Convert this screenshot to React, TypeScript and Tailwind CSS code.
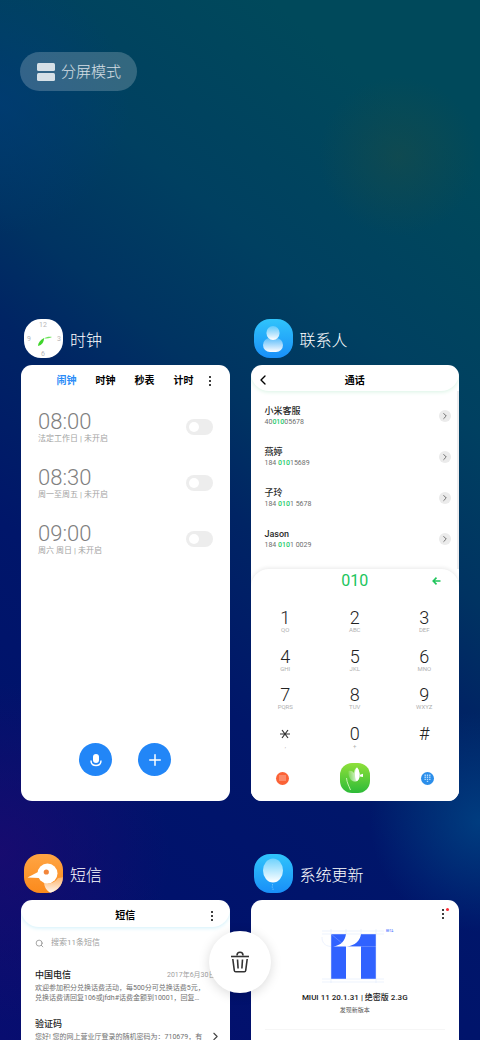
import React, { useState } from 'react';
import { ChevronLeft, ChevronRight, Plus, Search } from 'lucide-react';

interface Alarm {
  time: string;
  label: string;
}

interface CallEntry {
  name: string;
  number: [string, string, string];
}

const alarms: Alarm[] = [
  { time: '08:00', label: '法定工作日 | 未开启' },
  { time: '08:30', label: '周一至周五 | 未开启' },
  { time: '09:00', label: '周六 周日 | 未开启' },
];

const calls: CallEntry[] = [
  { name: '小米客服', number: ['40', '010', '05678'] },
  { name: '燕婷', number: ['184 ', '010', '15689'] },
  { name: '子玲', number: ['184 ', '010', '1 5678'] },
  { name: 'Jason', number: ['184 ', '010', '1 0029'] },
];

const dialKeys = [
  { digit: '1', sub: 'QO' },
  { digit: '2', sub: 'ABC' },
  { digit: '3', sub: 'DEF' },
  { digit: '4', sub: 'GHI' },
  { digit: '5', sub: 'JKL' },
  { digit: '6', sub: 'MNO' },
  { digit: '7', sub: 'PQRS' },
  { digit: '8', sub: 'TUV' },
  { digit: '9', sub: 'WXYZ' },
  { digit: '*', sub: ',' },
  { digit: '0', sub: '+' },
  { digit: '#', sub: '' },
];

const ClockIcon: React.FC = () => (
  <svg viewBox="0 0 39 39" className="size-[39px]" aria-hidden="true">
    <rect width="39" height="39" rx="17" fill="#fff" />
    <g fill="#b8b8b8" fontSize="7" fontFamily="Roboto, sans-serif" textAnchor="middle">
      <text x="19" y="8">12</text>
      <text x="35" y="22">3</text>
      <text x="19" y="37">6</text>
      <text x="5" y="22">9</text>
    </g>
    <path d="M14 27c0-3 2-6 6-8 0 4-2 7-6 8z" fill="#3fd52b" />
    <path d="M20 19.500c2-1.500 5-2 8-1.500-2 1.500-5 1.500-8 1.500z" fill="#6be35a" />
  </svg>
);

const ContactsIcon: React.FC = () => (
  <svg viewBox="0 0 39 39" className="size-[39px]" aria-hidden="true">
    <defs>
      <linearGradient id="contactsBg" x1="0" y1="0" x2="0" y2="1">
        <stop offset="0" stopColor="#30c4fb" />
        <stop offset="1" stopColor="#198ff8" />
      </linearGradient>
      <linearGradient id="contactsFg" x1="0" y1="0" x2="0" y2="1">
        <stop offset="0" stopColor="#fff" stopOpacity="0.25" />
        <stop offset="1" stopColor="#fff" />
      </linearGradient>
    </defs>
    <rect width="39" height="39" rx="16" fill="url(#contactsBg)" />
    <rect x="9" y="19" width="20" height="14" rx="7" fill="url(#contactsFg)" />
    <rect x="12.500" y="7" width="13" height="14" rx="6.500" fill="url(#contactsFg)" />
  </svg>
);

const MessagesIcon: React.FC = () => (
  <svg viewBox="0 0 39 39" className="size-[39px]" aria-hidden="true">
    <defs>
      <linearGradient id="messagesBg" x1="0" y1="0" x2="0" y2="1">
        <stop offset="0" stopColor="#ffa544" />
        <stop offset="1" stopColor="#fb8a1c" />
      </linearGradient>
      <linearGradient id="messagesBody" x1="0" y1="0" x2="0" y2="1">
        <stop offset="0" stopColor="#fff" stopOpacity="0.3" />
        <stop offset="1" stopColor="#fff" stopOpacity="0.95" />
      </linearGradient>
      <clipPath id="messagesClip">
        <rect width="39" height="39" rx="16" />
      </clipPath>
    </defs>
    <g clipPath="url(#messagesClip)">
      <rect width="39" height="39" fill="url(#messagesBg)" />
      <path d="M20 28c4 3 11 1 14-4l6-1v16H27c-4-2-7-6-7-11z" fill="url(#messagesBody)" />
      <path d="M3.500 23.500 15 17.500v6.500z" fill="#fff" />
      <circle cx="23.500" cy="19.500" r="10" fill="#fff" />
      <circle cx="22.300" cy="18" r="2.600" fill="#f2853a" />
    </g>
  </svg>
);

const UpdaterIcon: React.FC = () => (
  <svg viewBox="0 0 39 39" className="size-[39px]" aria-hidden="true">
    <defs>
      <linearGradient id="balloon" x1="0" y1="0" x2="0" y2="1">
        <stop offset="0" stopColor="#6fd2fd" />
        <stop offset="1" stopColor="#fff" />
      </linearGradient>
    </defs>
    <rect width="39" height="39" rx="16" fill="url(#contactsBg)" />
    <ellipse cx="19" cy="16.500" rx="10" ry="12" fill="url(#balloon)" />
    <path d="M18.500 30v2l-.500 1 1 1.500v1.500" stroke="#7fcfff" strokeWidth="0.700" strokeDasharray="1.500 1" fill="none" />
  </svg>
);

const CallIcon: React.FC = () => (
  <svg viewBox="0 0 30 30" className="size-[30px]" aria-hidden="true">
    <defs>
      <linearGradient id="callBg" x1="0" y1="0" x2="0" y2="1">
        <stop offset="0" stopColor="#8fe03a" />
        <stop offset="1" stopColor="#2dbb38" />
      </linearGradient>
      <linearGradient id="callPetal" x1="0" y1="0" x2="1" y2="0">
        <stop offset="0" stopColor="#fff" stopOpacity="0.15" />
        <stop offset="1" stopColor="#fff" />
      </linearGradient>
    </defs>
    <rect width="30" height="30" rx="12" fill="url(#callBg)" />
    <path d="M8.500 8c2-.500 4 0 5.500 2 0-3 1.500-4.500 3-5.500 2 2 3 6 2.500 9-.300 3-2.500 5.500-5 5-4-.500-6.500-5-6-10.500z" fill="url(#callPetal)" />
    <path d="M17 4.500c2 2 2.800 6 2.300 9.500-.300 2-1.300 4-2.800 4-2-3-2.300-10.500.500-13.500z" fill="#fff" />
    <path d="M20 11.800 23 10.800v3.200l-3-.500z" fill="#fff" />
    <path d="M6.500 15c.500 5 2 7 4 12" stroke="#c9f3b0" strokeWidth="1" fill="none" />
  </svg>
);

const TrashIcon: React.FC = () => (
  <svg viewBox="0 0 20 22" className="h-[22px] w-5" fill="none" stroke="#333" strokeWidth="1.600" aria-hidden="true">
    <path d="M1 5.500h18" />
    <path d="M7 4.500C7 2 8 1.300 10 1.300S13 2 13 4.500" />
    <path d="M2.800 8 4.300 19.500c.100.800.600 1.200 1.400 1.200h8.600c.800 0 1.300-.400 1.400-1.200L17.200 8" />
    <path d="M7.500 8.500l.600 9M12.500 8.500l-.600 9" />
  </svg>
);

const MiuiLogo: React.FC = () => (
  <svg viewBox="0 0 85 58" className="h-[58px] w-[85px]" role="img" aria-label="MIUI 11">
    <g fill="#3062ff">
      <path d="M17 9h15c-1 7-5 11.500-13 12.500h13V54H17z" />
      <path d="M47 9h15v45H47V21.500H33C41 20.500 46 16 47 9z" />
    </g>
    <g stroke="#dbe4fa" strokeWidth="0.500" fill="none">
      <path d="M8 6h62M8 9h62M8 54h62M8 57h62M17 4v54M32 4v5M47 4v5M62 4v54" />
      <path d="M17 21.500C10 21 8 17 8 12" />
      <path d="M17 9l15 12.500M32 21.500h30" strokeOpacity="0.500" />
    </g>
    <text x="72" y="7" fontSize="3" fontFamily="Roboto, sans-serif" fill="#3062ff">BETA</text>
  </svg>
);

const MoreDots: React.FC<{ alert?: boolean }> = ({ alert }) => (
  <button aria-label="更多" className="relative flex h-4 w-2 flex-col items-center justify-center gap-0.5">
    <span className="size-[2px] rounded-full bg-black" />
    <span className="size-[2px] rounded-full bg-black" />
    <span className="size-[2px] rounded-full bg-black" />
    {alert && <span className="absolute -right-0.5 top-0.5 size-[3px] rounded-full bg-red-500" />}
  </button>
);

interface TaskProps {
  title: string;
  icon: React.ReactNode;
  children: React.ReactNode;
}

const Task: React.FC<TaskProps> = ({ title, icon, children }) => (
  <section className="flex min-w-0 flex-col gap-[7px]">
    <header className="flex items-center gap-[7px] pl-[3px]">
      {icon}
      <h2 className="pt-1 text-[16px] leading-6 font-light text-white">{title}</h2>
    </header>
    <div className="flex h-[436px] flex-col overflow-hidden rounded-[11px] bg-white">{children}</div>
  </section>
);

const ClockTask: React.FC = () => {
  const [enabled, setEnabled] = useState<Record<string, boolean>>({});

  return (
    <Task title="时钟" icon={<ClockIcon />}>
      <nav className="flex items-center justify-end gap-[19px] pt-2 pr-4 text-[10px] leading-4 font-bold">
        <button className="text-[#2b8cf7]">闹钟</button>
        <button>时钟</button>
        <button>秒表</button>
        <div className="flex items-center gap-3">
          <button>计时</button>
          <MoreDots />
        </div>
      </nav>

      <ul className="mt-[18px] flex flex-1 flex-col gap-4 px-[17px]">
        {alarms.map((alarm) => (
          <li key={alarm.time} className="flex h-10 items-center justify-between">
            <label htmlFor={alarm.time} className="text-[#808080]">
              <span className="block text-[22px] leading-6 font-light">{alarm.time}</span>
              <span className="block text-[8px] leading-[10px] text-[#a3a3a3]">{alarm.label}</span>
            </label>
            <input
              id={alarm.time}
              type="checkbox"
              role="switch"
              checked={!!enabled[alarm.time]}
              onChange={(e) => setEnabled({ ...enabled, [alarm.time]: e.target.checked })}
              className="h-4 w-[27px] appearance-none rounded-full bg-[#ededed] p-[3px] before:block before:size-[10px] before:rounded-full before:bg-white checked:bg-[#2286f7] checked:before:ml-auto"
            />
          </li>
        ))}
      </ul>

      <div className="flex justify-center gap-[26px] pb-[25px]">
        <button aria-label="语音" className="flex size-[33px] items-center justify-center rounded-full bg-[#2286f7]">
          <svg viewBox="0 0 12 14" className="h-[14px] w-3" aria-hidden="true">
            <rect x="3" y="1" width="6" height="9" rx="3" fill="#fff" />
            <path d="M1 7.500c0 3 2 5 5 5s5-2 5-5" stroke="#fff" strokeWidth="1.400" fill="none" />
          </svg>
        </button>
        <button aria-label="添加" className="flex size-[33px] items-center justify-center rounded-full bg-[#2286f7] text-white">
          <Plus size={18} />
        </button>
      </div>
    </Task>
  );
};

const ContactsTask: React.FC = () => (
  <Task title="联系人" icon={<ContactsIcon />}>
    <div className="grid grid-cols-3 items-center rounded-b-[18px] px-1 pt-1.5 pb-0.5 shadow-[0_1px_4px_#d9f3e4]">
      <button aria-label="返回">
        <ChevronLeft size={16} />
      </button>
      <h3 className="pt-0.5 text-center text-[10px] leading-4 font-bold">通话</h3>
    </div>

    <ul className="flex flex-1 flex-col border-r-2 border-[#ececee] pt-1 pr-1.5 pl-3.5">
      {calls.map((call) => (
        <li key={call.name} className="flex h-[41px] items-center justify-between">
          <div className="text-[7px] leading-[10px] text-[#6e6e6e]">
            <p className="text-[9px] leading-3 font-medium text-[#2a2a2a]">{call.name}</p>
            <p>
              {call.number[0]}
              <span className="font-medium text-[#1ecb6a]">{call.number[1]}</span>
              {call.number[2]}
            </p>
          </div>
          <button aria-label={call.name} className="flex size-3 items-center justify-center rounded-full bg-[#ebebeb] text-[#555]">
            <ChevronRight size={10} />
          </button>
        </li>
      ))}
    </ul>

    <div className="flex h-[232px] flex-col rounded-t-[18px] bg-white pb-2 shadow-[0_-1px_4px_#e9e9e9]">
      <div className="grid grid-cols-3 items-center text-[#20c55c]">
        <output className="col-start-2 text-center text-[16px] leading-6">010</output>
        <button aria-label="删除" className="flex justify-end pr-[18px]">
          <svg viewBox="0 0 9 8" className="h-2 w-[9px]" fill="none" stroke="currentColor" strokeWidth="1.600" aria-hidden="true">
            <path d="M4.500.600 1.200 4l3.300 3.400M1.200 4H8.500" />
          </svg>
        </button>
      </div>

      <div className="mt-4 grid flex-1 grid-cols-3 content-between">
        {dialKeys.map((key) => (
          <button key={key.digit} className="flex h-6 flex-col items-center">
            {key.digit === '*' ? (
              <svg viewBox="0 0 12 18" className="h-[18px] w-3" stroke="#333" strokeWidth="1.200" aria-label="*">
                <path d="M1 9h10M3 5l6 8M9 5l-6 8" />
              </svg>
            ) : (
              <span className="text-[18px] leading-[18px] font-light text-[#222]">{key.digit}</span>
            )}
            <span className="text-[6px] leading-[6px] text-[#b0b0b0]">{key.sub}</span>
          </button>
        ))}
      </div>

      <div className="mt-3.5 flex items-center justify-between px-[25px]">
        <button aria-label="菜单" className="flex size-[13px] items-center justify-center rounded-full bg-[#fb6236]">
          <svg viewBox="0 0 7 6" className="h-1.5 w-[7px]" stroke="#ffc7b6" strokeWidth="0.800" aria-hidden="true">
            <path d="M0 1h7M0 3h7M0 5h7" />
          </svg>
        </button>
        <button aria-label="拨打">
          <CallIcon />
        </button>
        <button aria-label="键盘" className="flex size-[13px] items-center justify-center rounded-full bg-[#2b8eea]">
          <svg viewBox="0 0 7 8" className="h-2 w-[7px]" fill="#b5dcff" aria-hidden="true">
            <path d="M.500.500h1.400v1.400H.500zM2.800.500h1.400v1.400H2.800zM5.100.500h1.400v1.400H5.100zM.500 2.600h1.400V4H.500zM2.800 2.600h1.400V4H2.800zM5.100 2.600h1.400V4H5.100zM.500 4.700h1.400v1.400H.500zM2.800 4.700h1.400v1.400H2.800zM5.100 4.700h1.400v1.400H5.100zM2.800 6.800h1.400V8H2.800z" />
          </svg>
        </button>
      </div>
    </div>
  </Task>
);

const MessagesTask: React.FC = () => (
  <Task title="短信" icon={<MessagesIcon />}>
    <div className="grid grid-cols-3 items-center rounded-b-[18px] px-3.5 pt-2 pb-[3px] shadow-[0_1px_4px_#d0f0fa]">
      <h3 className="col-start-2 text-center text-[10px] leading-4 font-bold">短信</h3>
      <div className="flex justify-end">
        <MoreDots />
      </div>
    </div>

    <label className="mt-2 flex items-center gap-[7px] px-3.5 text-[#8a8a8a]">
      <Search size={9} />
      <input
        type="search"
        placeholder="搜索11条短信"
        className="h-4 min-w-0 flex-1 text-[8px] leading-4 outline-none placeholder:text-[#a0a0a0]"
      />
    </label>

    <article className="mt-[18px] px-3.5 text-[7px] leading-[10px] text-[#707070]">
      <div className="flex items-center justify-between">
        <h4 className="text-[9px] leading-3 font-medium text-[#1c1c1c]">中国电信</h4>
        <time className="text-[#a0a0a0]">2017年6月30日</time>
      </div>
      <p className="mt-0.5 whitespace-nowrap">欢迎参加积分兑换话费活动，每500分可兑换话费5元，</p>
      <p className="whitespace-nowrap">兑换话费请回复106或jfdh#话费金额到10001，回复…</p>
    </article>

    <article className="mt-[15px] px-3.5 text-[7px] leading-[10px] text-[#707070]">
      <h4 className="text-[9px] leading-3 font-medium text-[#1c1c1c]">验证码</h4>
      <div className="flex items-center justify-between">
        <p className="whitespace-nowrap">您好! 您的网上营业厅登录的随机密码为：710679，有</p>
        <ChevronRight size={13} className="-mr-1.5 shrink-0 text-[#444]" />
      </div>
    </article>
  </Task>
);

const UpdaterTask: React.FC = () => (
  <Task title="系统更新" icon={<UpdaterIcon />}>
    <div className="flex justify-end pt-1.5 pr-3">
      <MoreDots alert />
    </div>
    <div className="flex flex-col items-center">
      <div className="pt-[3px] pl-1">
        <MiuiLogo />
      </div>
      <h3 className="mt-2 text-[8px] leading-[14px] font-medium text-[#222]">MIUI 11 20.1.31 | 绝密版 2.3G</h3>
      <p className="text-[6px] leading-[10px] text-[#555]">发现新版本</p>
    </div>
    <hr className="mx-3.5 mt-3.5 border-[#f6f6f6]" />
  </Task>
);

const App: React.FC = () => {
  return (
    <main
      lang="zh-CN"
      className="relative h-screen overflow-hidden bg-[#00166a] bg-[radial-gradient(circle_at_83%_15%,#1c4c4788_0%,#1c4c4700_80px),radial-gradient(circle_at_100%_79%,#004a8ab3_0%,#004a8a00_110px),radial-gradient(circle_at_0%_10%,#003c7a99_0%,#003c7a00_130px),radial-gradient(circle_at_0%_82%,#1c0a70cc_0%,#1c0a7000_170px),linear-gradient(220deg,#00495b_12%,#004061_30%,#003362_42%,#002464_50%,#00166a_64%,#00126c_80%,#080d70_100%)] font-[Roboto,'Noto_Sans_CJK_SC',sans-serif]"
    >
      <div className="px-5 pt-[52px]">
        <button className="flex h-[39px] items-center gap-1.5 rounded-full bg-white/20 pr-4 pl-[17px] text-white/80">
          <svg viewBox="0 0 18 18" className="size-[18px]" fill="currentColor" aria-hidden="true">
            <rect width="18" height="8" rx="1.500" />
            <rect y="10" width="18" height="8" rx="1.500" />
          </svg>
          <span className="text-[15px] leading-5 font-light">分屏模式</span>
        </button>
      </div>

      <div className="mt-[228px] grid grid-cols-2 gap-x-[21px] gap-y-[53px] px-[21px]">
        <ClockTask />
        <ContactsTask />
        <MessagesTask />
        <UpdaterTask />
      </div>

      <div className="absolute inset-x-0 bottom-[47px] flex justify-center">
        <button aria-label="清除" className="flex size-[62px] items-center justify-center rounded-full bg-white shadow-[0_2px_12px_#00000026]">
          <TrashIcon />
        </button>
      </div>
    </main>
  );
};

export default App;
